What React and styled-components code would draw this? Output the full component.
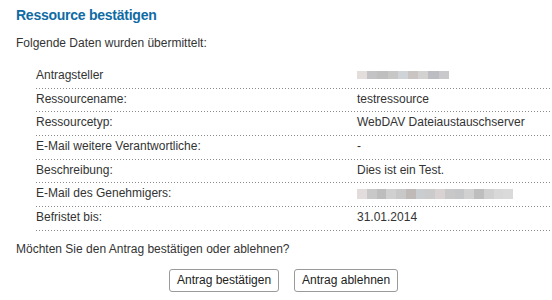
import React from 'react'
import styled, { createGlobalStyle } from 'styled-components'

const GlobalStyle = createGlobalStyle`
  html, body {
    margin: 0;
    padding: 0;
    background: #fff;
  }
  body {
    font-family: "Liberation Sans", Arial, sans-serif;
    font-size: 12px;
    color: #333;
  }
`

const Page = styled.div`
  padding: 6px 2px 0 16px;
`

const Title = styled.h2`
  margin: 0;
  font-size: 14px;
  letter-spacing: -0.25px;
  line-height: 18px;
  font-weight: bold;
  color: #0f6ba4;
`

const Intro = styled.p`
  margin: 12px 0 0;
  line-height: 14px;
`

const DataTable = styled.table`
  margin: 15px 0 0 20px;
  width: calc(100% - 20px);
  border-collapse: collapse;
`

const Row = styled.tr`
  background: linear-gradient(to right, #8a8a8a 1px, transparent 1px) left bottom / 3px 1px repeat-x;
`

const Label = styled.td`
  width: 321px;
  padding: 3px 0 5.67px;
  line-height: 15px;
  vertical-align: top;
`

const Value = styled.td`
  padding: 3px 0 5.67px;
  line-height: 15px;
  vertical-align: top;
`

const Redacted = styled.span`
  display: inline-flex;
  vertical-align: middle;
  height: ${p => p.$h}px;
  margin-top: ${p => p.$top}px;
`

const Cell = styled.span`
  width: ${p => p.$w}px;
  height: 100%;
  background: ${p => p.$tone};
`

const Question = styled.p`
  margin: 11px 0 0;
  line-height: 14px;
`

const Actions = styled.div`
  display: flex;
  gap: 15px;
  padding: 13px 0 0 153px;
`

const Button = styled.button`
  height: 23px;
  padding: 0 7px;
  font-family: "Liberation Sans", Arial, sans-serif;
  font-size: 12px;
  color: #222;
  background: #fff;
  border: 1px solid #9a9a9a;
  border-radius: 3px;
`

const short = ['#e3dedc', '#c3c3c5', '#bfbfbf', '#c7c8c6', '#cfd4d8', '#cac4c3', '#d4d2d0', '#bcbdc2', '#c9c9cc']
const long = ['#e2dcdc', '#c8c8c8', '#bdbdbd', '#d0d0d0', '#c8c8c8', '#bfbab8', '#cacdd0', '#cbcbcb', '#d8d2d2', '#c8c8c8', '#c5c6c8', '#d1d1d1', '#bebebe', '#d0d0d0', '#d8d8d8', '#dadada']

const Blur = ({ tones, h, top, w }) => (
  <Redacted $h={h} $top={top}>
    {tones.map((t, i) => <Cell key={i} $tone={t} $w={w} />)}
  </Redacted>
)

const rows = [
  ['Antragsteller', <Blur tones={short} h={8} top={-2} w={10.2} />],
  ['Ressourcename:', 'testressource'],
  ['Ressourcetyp:', 'WebDAV Dateiaustauschserver'],
  ['E-Mail weitere Verantwortliche:', '-'],
  ['Beschreibung:', 'Dies ist ein Test.'],
  ['E-Mail des Genehmigers:', <Blur tones={long} h={10} top={0} w={9.75} />],
  ['Befristet bis:', '31.01.2014'],
]

export default function App() {
  return (
    <>
      <GlobalStyle />
      <Page>
        <Title>Ressource bestätigen</Title>
        <Intro>Folgende Daten wurden übermittelt:</Intro>
        <DataTable>
          <tbody>
            {rows.map(([label, value]) => (
              <Row key={label}>
                <Label>{label}</Label>
                <Value>{value}</Value>
              </Row>
            ))}
          </tbody>
        </DataTable>
        <Question>Möchten Sie den Antrag bestätigen oder ablehnen?</Question>
        <Actions>
          <Button>Antrag bestätigen</Button>
          <Button>Antrag ablehnen</Button>
        </Actions>
      </Page>
    </>
  )
}
